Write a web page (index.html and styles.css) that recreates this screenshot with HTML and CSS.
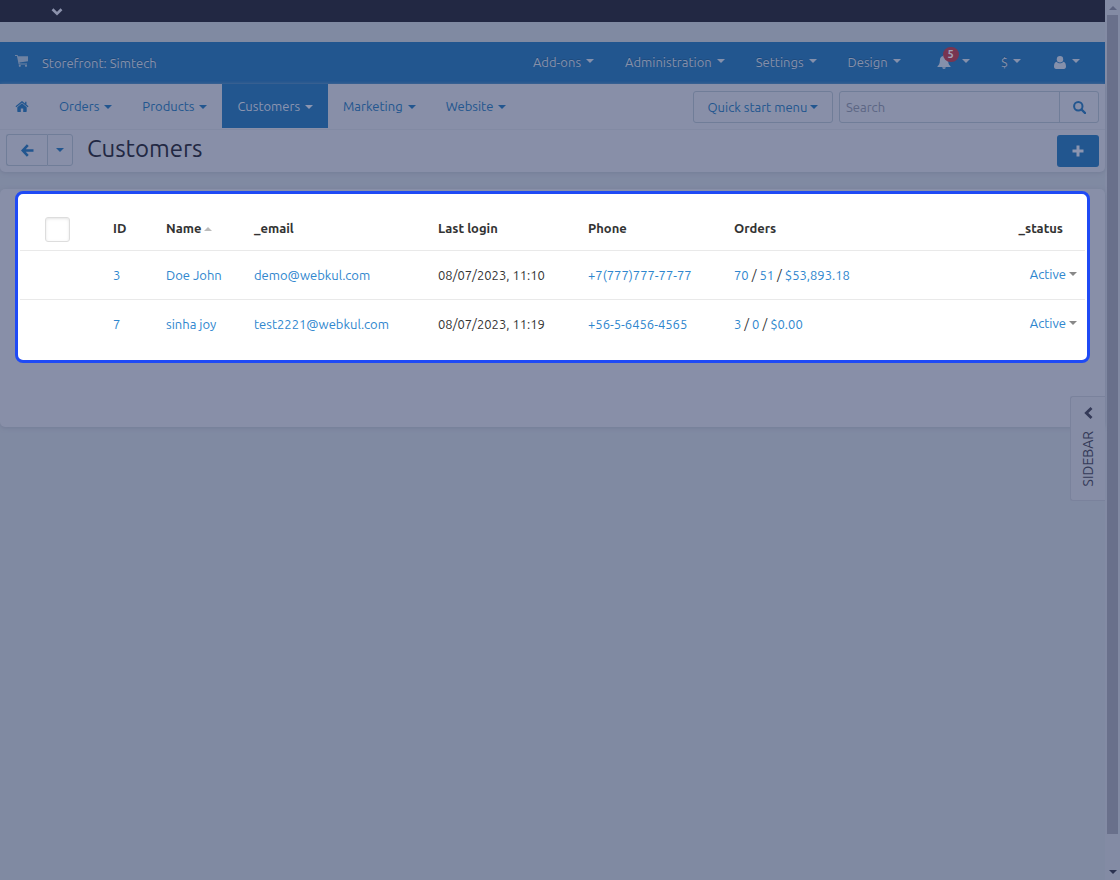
FILE: index.html
```html
<!DOCTYPE html>
<html lang="en">
<head>
    <meta charset="UTF-8">
    <meta name="viewport" content="width=device-width, initial-scale=1.0">
    <title>Customers</title>
    <link rel="stylesheet" href="styles.css">
</head>
<body>
    <div class="page">
        <div class="topbar">
            <button type="button" class="topbar-toggle" aria-label="Expand">
                <svg width="12" height="8" viewBox="0 0 12 8"><path d="M1.5 1.2L6 5.6L10.5 1.2" fill="none" stroke="currentColor" stroke-width="2.6"/></svg>
            </button>
        </div>

        <header class="header">
            <a href="#" class="storefront">
                <svg width="13" height="12" viewBox="0 0 13 12"><path d="M0 0h2.6l.4 1.3H13v5L4.4 7.4l.2 1H12v1H3.7L1.9 1H0z" fill="currentColor"/><circle cx="4.8" cy="10.8" r="1.1" fill="currentColor"/><circle cx="11" cy="10.8" r="1.1" fill="currentColor"/></svg>
                <span>Storefront: Simtech</span>
            </a>
            <nav class="header-menu">
                <a href="#">Add-ons<i class="caret"></i></a>
                <a href="#">Administration<i class="caret"></i></a>
                <a href="#">Settings<i class="caret"></i></a>
                <a href="#">Design<i class="caret"></i></a>
                <a href="#" class="bell" aria-label="Notifications">
                    <svg width="14" height="14" viewBox="0 0 14 14"><path d="M7 0c.6 0 1 .4 1 1 2 .5 3.100 2 3.100 4.200 0 3 .9 4.800 2.400 6v.8H.5v-.8c1.500-1.200 2.400-3 2.400-6C2.900 3 4 1.500 6 1c0-.6.4-1 1-1zM5.200 12.300h3.600a1.800 1.700 0 0 1-3.600 0z" fill="currentColor"/></svg>
                    <span class="badge">5</span>
                    <i class="caret"></i>
                </a>
                <a href="#">$<i class="caret"></i></a>
                <a href="#" class="user" aria-label="Account">
                    <svg width="12" height="13" viewBox="0 0 12 13"><circle cx="6" cy="3.300" r="3.200" fill="currentColor"/><path d="M2.700 5.700C3.600 6.800 4.700 7.200 6 7.200s2.400-.4 3.300-1.500C11.200 5.900 12 8 12 10.600 12 12 11.200 13 9.900 13H2.100C.8 13 0 12 0 10.600 0 8 .8 5.900 2.700 5.700z" fill="currentColor"/></svg>
                    <i class="caret"></i>
                </a>
            </nav>
        </header>

        <div class="panel toolbar">
            <div class="navbar">
                <nav class="main-menu">
                    <a href="#" class="home" aria-label="Home">
                        <svg width="14" height="11" viewBox="0 0 14 11"><path d="M7 2.300L11.700 6.200V10.300a.6.6 0 0 1-.6.6H8.200V7.500H5.800v3.400H2.900a.6.6 0 0 1-.6-.6V6.200z" fill="currentColor"/><path d="M.9 5.700L7 .8L13.100 5.700M10.800 .7V3.700" fill="none" stroke="currentColor" stroke-width="1.300"/></svg>
                    </a>
                    <a href="#">Orders<i class="caret"></i></a>
                    <a href="#">Products<i class="caret"></i></a>
                    <a href="#" class="active">Customers<i class="caret"></i></a>
                    <a href="#">Marketing<i class="caret"></i></a>
                    <a href="#">Website<i class="caret"></i></a>
                </nav>
                <div class="tools">
                    <button type="button" class="btn quick-menu">Quick start menu<i class="caret"></i></button>
                    <form class="search" action="#">
                        <input type="text" placeholder="Search" aria-label="Search">
                        <button type="submit" aria-label="Find">
                            <svg width="13" height="13" viewBox="0 0 13 13"><circle cx="5.300" cy="5.300" r="4.200" fill="none" stroke="currentColor" stroke-width="2"/><path d="M8.500 8.500L12 12" stroke="currentColor" stroke-width="2.400" stroke-linecap="round"/></svg>
                        </button>
                    </form>
                </div>
            </div>
            <div class="actions">
                <div class="btn-group">
                    <button type="button" class="btn back" aria-label="Back">
                        <svg width="13" height="13" viewBox="0 0 13 13"><path d="M6.800 1.200L1.700 6.500L6.800 11.800M2 6.500H12.500" fill="none" stroke="currentColor" stroke-width="2.600"/></svg>
                    </button>
                    <button type="button" class="btn back-menu" aria-label="History"><i class="caret"></i></button>
                </div>
                <h1>Customers</h1>
                <button type="button" class="btn-add" aria-label="Add customer">
                    <svg width="12" height="12" viewBox="0 0 12 12"><path d="M6 .5V11.500M.5 6H11.500" stroke="currentColor" stroke-width="3"/></svg>
                </button>
            </div>
        </div>

        <main class="panel content">
            <div class="highlight">
                <table class="customers">
                    <colgroup>
                        <col class="col-check">
                        <col class="col-id">
                        <col class="col-name">
                        <col class="col-email">
                        <col class="col-login">
                        <col class="col-phone">
                        <col>
                        <col class="col-status">
                    </colgroup>
                    <thead>
                        <tr>
                            <th class="check"><input type="checkbox" aria-label="Select all"></th>
                            <th>ID</th>
                            <th>Name<i class="caret sort"></i></th>
                            <th>_email</th>
                            <th>Last login</th>
                            <th>Phone</th>
                            <th>Orders</th>
                            <th class="status">_status</th>
                        </tr>
                    </thead>
                    <tbody>
                        <tr>
                            <td></td>
                            <td><a href="#">3</a></td>
                            <td><a href="#">Doe John</a></td>
                            <td><a href="#">demo@webkul.com</a></td>
                            <td>08/07/2023, 11:10</td>
                            <td><a href="#">+7(777)777-77-77</a></td>
                            <td><a href="#">70</a> / <a href="#">51</a> / <a href="#">$53,893.18</a></td>
                            <td class="status"><button type="button">Active<i class="caret"></i></button></td>
                        </tr>
                        <tr>
                            <td></td>
                            <td><a href="#">7</a></td>
                            <td><a href="#">sinha joy</a></td>
                            <td><a href="#">test2221@webkul.com</a></td>
                            <td>08/07/2023, 11:19</td>
                            <td><a href="#">+56-5-6456-4565</a></td>
                            <td><a href="#">3</a> / <a href="#">0</a> / <a href="#">$0.00</a></td>
                            <td class="status"><button type="button">Active<i class="caret"></i></button></td>
                        </tr>
                    </tbody>
                </table>
            </div>
        </main>

        <button type="button" class="sidebar-toggle">
            <svg width="9" height="12" viewBox="0 0 9 12"><path d="M7.500 1L2.300 6L7.500 11" fill="none" stroke="currentColor" stroke-width="2.800"/></svg>
            <span>SIDEBAR</span>
        </button>
    </div>

    <div class="scrollbar">
        <i class="caret scroll-up"></i>
        <div class="thumb"></div>
        <i class="caret scroll-down"></i>
    </div>
</body>
</html>
```
FILE: styles.css
```css
* {
    box-sizing: border-box;
}

body {
    display: flex;
    min-height: 100vh;
    margin: 0;
    background: #808aa2;
    color: #333;
    font-family: Ubuntu, "Noto Sans", sans-serif;
    font-size: 13px;
    line-height: 20px;
}

a {
    color: #2e86ce;
    text-decoration: none;
}

button,
input {
    margin: 0;
    padding: 0;
    border: none;
    background: none;
    color: inherit;
    font: inherit;
}

button {
    cursor: pointer;
}

svg {
    display: block;
}

.caret {
    display: inline-block;
    margin-left: 5px;
    border: 4px solid transparent;
    border-top-color: currentColor;
    border-bottom: 0;
    vertical-align: middle;
}

.page {
    position: relative;
    flex: 1;
    min-width: 0;
}

.topbar {
    display: flex;
    align-items: center;
    height: 22px;
    margin-bottom: 20px;
    padding: 2px 51px 0;
    background: #222843;
    color: #8c92ac;
}

/* blue header */
.header {
    display: flex;
    align-items: center;
    justify-content: space-between;
    height: 42px;
    padding: 0 25px 0 15px;
    background: #22568f;
}

.header a {
    display: flex;
    align-items: center;
    color: #8590ab;
    text-shadow: 0 -1px 0 #1e4a7c;
}

.header .storefront {
    gap: 14px;
}

.storefront svg {
    margin-bottom: 4px;
    color: #6f83a3;
}

.header-menu {
    display: flex;
    gap: 31px;
    margin-bottom: 2px;
}

.header-menu .caret {
    margin-bottom: 2px;
}

.header-menu .bell {
    position: relative;
    margin-left: 5px;
}

.header-menu .bell .caret {
    margin-left: 11px;
}

.badge {
    position: absolute;
    top: -5px;
    left: 6px;
    width: 16px;
    border-radius: 8px;
    background: #783551;
    color: #a3a3b7;
    font-size: 11px;
    font-weight: bold;
    line-height: 15px;
    text-align: center;
    text-shadow: none;
}

.header-menu .user {
    margin-left: 2px;
}

.header-menu .user .caret {
    margin-left: 6px;
}

/* white panels */
.panel {
    background: #888fa8;
    box-shadow: 0 1px 4px #737c96;
}

.toolbar {
    margin-bottom: 17px;
    border-radius: 0 0 5px 5px;
}

.navbar {
    display: flex;
    align-items: flex-start;
    justify-content: space-between;
    height: 46px;
    padding-right: 6px;
    border-bottom: 1px solid #828aa3;
}

.main-menu {
    display: flex;
}

.main-menu a {
    display: flex;
    align-items: center;
    height: 44px;
    padding: 0 15px;
    color: #22568f;
}

.main-menu .caret {
    margin-top: 2px;
}

.main-menu .active {
    background: #22568f;
    color: #8c95b0;
}

.tools {
    display: flex;
    gap: 6px;
    padding-top: 7px;
}

.btn {
    height: 32px;
    border: 1px solid #707d98;
    border-radius: 3px;
    color: #22568f;
}

.quick-menu {
    width: 140px;
}

.quick-menu .caret {
    margin: 0 0 3px 3px;
}

.search {
    display: flex;
    width: 260px;
    height: 32px;
    border: 1px solid #707d98;
    border-radius: 3px;
}

.search input {
    flex: 1;
    min-width: 0;
    padding: 0 6px;
}

.search input::placeholder {
    color: #5c6684;
    opacity: 1;
}

.search button {
    display: flex;
    align-items: center;
    justify-content: center;
    width: 39px;
    border-left: 1px solid #707d98;
    color: #22568f;
}

.actions {
    display: flex;
    align-items: center;
    height: 42px;
    padding: 0 6px;
}

.btn-group {
    display: flex;
    margin-bottom: 2px;
}

.btn-group .btn {
    display: flex;
    align-items: center;
    justify-content: center;
}

.btn-group .back {
    width: 41px;
    border-right: none;
    border-radius: 3px 0 0 3px;
}

.btn-group .back-menu {
    width: 26px;
    border-radius: 0 3px 3px 0;
}

.back-menu .caret {
    margin: 0;
}

h1 {
    margin: 0 auto 4px 14px;
    color: #222843;
    font-size: 24px;
    font-weight: normal;
    line-height: 30px;
}

.btn-add {
    display: flex;
    align-items: center;
    justify-content: center;
    width: 42px;
    height: 32px;
    border-radius: 3px;
    background: #22568f;
    color: #8c95b0;
}

.content {
    min-height: 238px;
    padding: 2px 15px 0;
    border-radius: 5px;
}

.highlight {
    padding: 0 2px 12px;
    border: 3px solid #1f4af5;
    border-radius: 8px;
    background: #fff;
}

/* customers table */
.customers {
    width: 100%;
    border-collapse: collapse;
    table-layout: fixed;
}

.col-check {
    width: 93px;
}

.col-id {
    width: 53px;
}

.col-name {
    width: 88px;
}

.col-email {
    width: 184px;
}

.col-login {
    width: 150px;
}

.col-phone {
    width: 146px;
}

.col-status {
    width: 110px;
}

.customers th,
.customers td {
    height: 49px;
    padding: 0;
    text-align: left;
    white-space: nowrap;
}

.customers th {
    height: 56px;
    padding-top: 13px;
    border-bottom: 1px solid #e9e9e9;
}

.customers tr + tr td {
    border-top: 1px solid #e9e9e9;
}

.customers .check {
    padding: 15px 0 0 25px;
}

.check input {
    display: block;
    width: 25px;
    height: 25px;
    border: 1px solid #ddd;
    border-radius: 3px;
    background: #fff;
    box-shadow: inset 0 1px 3px #e4e4e4;
    appearance: none;
}

.caret.sort {
    margin: 0 0 2px 3px;
    border-top: 0;
    border-bottom: 4px solid #bbb;
}

.customers .status {
    padding-right: 8px;
    text-align: right;
}

.customers td.status {
    padding-bottom: 2px;
}

.customers th.status {
    padding-right: 22px;
}

.status button {
    color: #2e86ce;
}

.status .caret {
    margin: 0 0 3px 3px;
    border-top-color: #888;
}

/* sidebar tab on the right edge */
.sidebar-toggle {
    position: absolute;
    top: 396px;
    right: 0;
    display: flex;
    flex-direction: column;
    align-items: center;
    gap: 12px;
    width: 35px;
    height: 105px;
    padding-top: 10px;
    border: 1px solid #7a829c;
    border-right: none;
    border-radius: 3px 0 0 3px;
    background: #868da6;
    color: #343a58;
}

.sidebar-toggle span {
    font-size: 14px;
    writing-mode: vertical-rl;
    transform: rotate(180deg);
}

.scrollbar {
    display: flex;
    flex-direction: column;
    align-items: center;
    width: 15px;
    padding: 6px 0;
    background: #838ba4;
    color: #2b3250;
}

.thumb {
    flex: 1;
    width: 11px;
    margin: 5px 0 36px;
    background: #69708b;
}

.scrollbar .caret {
    margin-left: 0;
}

.caret.scroll-up {
    border-top: 0;
    border-bottom: 4px solid #5c6380;
}
```
